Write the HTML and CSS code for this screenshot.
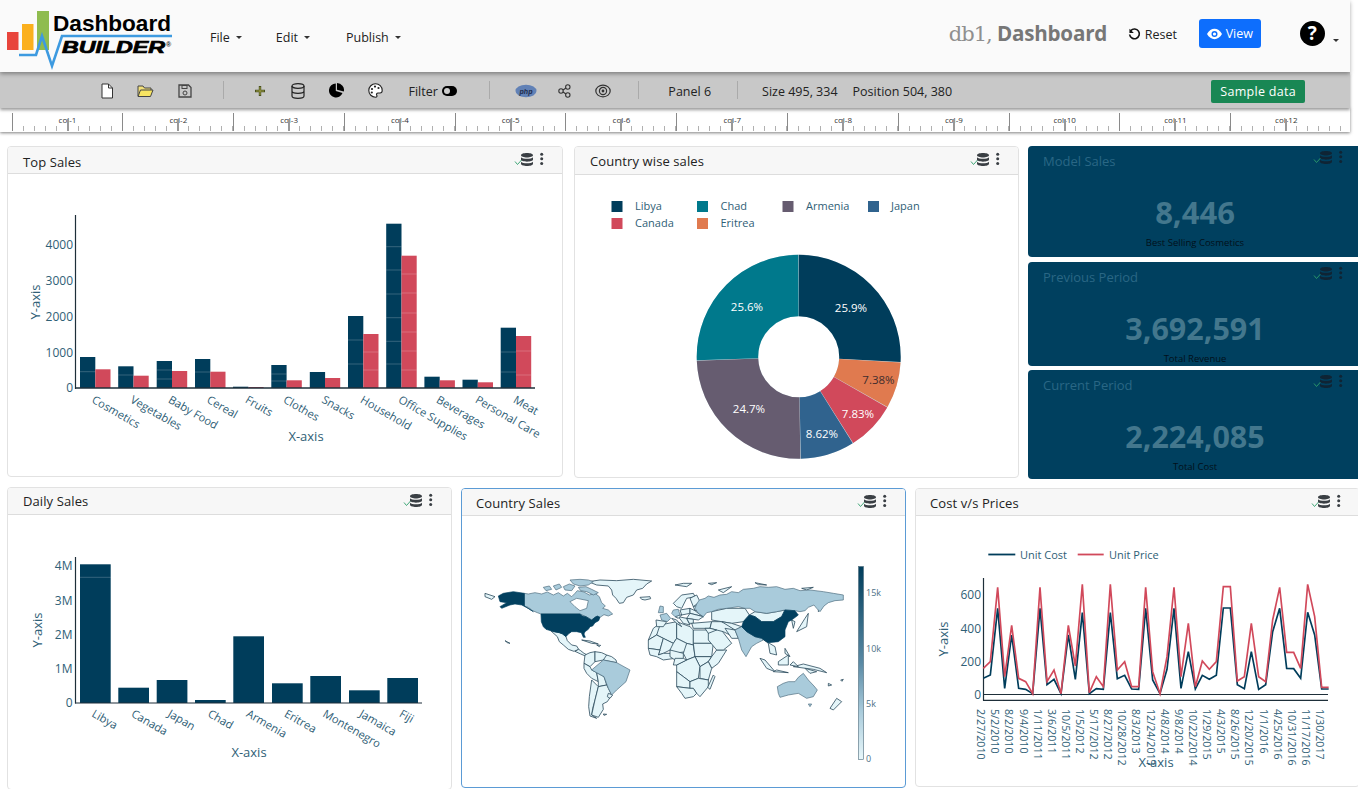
FILE: index.html
```html
<!DOCTYPE html>
<html lang="en">
<head>
<meta charset="utf-8">
<title>Dashboard Builder</title>
<link rel="stylesheet" href="styles.css">
</head>
<body>
<header class="top">
  <svg class="logo" width="190" height="72" viewBox="0 0 190 72">
    <rect x="7" y="32" width="11.500" height="18" fill="#e8453c"/>
    <rect x="22" y="24" width="11.500" height="26" fill="#fbb01d"/>
    <rect x="37" y="11" width="12" height="39" fill="#8fbc4f"/>
    <polyline points="19,55 36,55 42,36 52,66 62,36 172,36" fill="none" stroke="#3d9ae0" stroke-width="2.600"/>
    <text class="logo-a" x="53" y="31" textLength="118" lengthAdjust="spacingAndGlyphs">Dashboard</text>
    <text class="logo-b" x="62" y="53" textLength="103" lengthAdjust="spacingAndGlyphs">BUILDER</text>
    <text class="logo-r" x="166" y="47">®</text>
  </svg>
  <nav class="menu">
    <span class="menu-item m-file">File<i class="caret"></i></span>
    <span class="menu-item m-edit">Edit<i class="caret"></i></span>
    <span class="menu-item m-pub">Publish<i class="caret"></i></span>
  </nav>
  <div class="brand"><span class="brand-db">db1,</span> <b>Dashboard</b></div>
  <span class="reset">
    <svg width="13" height="13" viewBox="0 0 16 16"><path d="M3.500 3.200A6 6 0 1 1 2 8" fill="none" stroke="#111" stroke-width="2"/><path d="M1.800 .8v5.400h5.400z" fill="#111"/></svg>
    Reset</span>
  <span class="view">
    <svg width="15" height="12" viewBox="0 0 16 12"><path d="M0 6c2-3.600 5-5.500 8-5.500S14 2.400 16 6c-2 3.600-5 5.500-8 5.500S2 9.600 0 6z" fill="#fff"/><circle cx="8" cy="6" r="3.200" fill="#0d6efd"/><circle cx="8" cy="6" r="1.700" fill="#fff"/></svg>
    View</span>
  <span class="help">?</span>
  <i class="caret help-caret"></i>
</header>

<div class="toolbar">
  <span class="tb tb-first"><svg width="14" height="16" viewBox="0 0 14 16"><path d="M2 1h6.500L12.500 5v10H2z" fill="#fff" stroke="#333"/><path d="M8.500 1v4h4" fill="none" stroke="#333"/></svg></span>
  <span class="tb"><svg width="17" height="14" viewBox="0 0 17 14"><path d="M1 12V2h5l1.500 2H14v2" fill="#f2e07a" stroke="#444"/><path d="M1 12.500 3.500 6H16l-2.500 6.500z" fill="#f7e463" stroke="#444"/></svg></span>
  <span class="tb tb-save"><svg width="14" height="14" viewBox="0 0 14 14"><path d="M1 1h9.500L13 3.500V13H1z" fill="none" stroke="#444" stroke-width="1.300"/><rect x="4" y="1.500" width="5" height="3" fill="none" stroke="#444"/><circle cx="7" cy="9" r="2" fill="none" stroke="#444"/></svg></span>
  <i class="sep sep-a"></i>
  <span class="tb tb-plus"><svg width="12" height="12" viewBox="0 0 12 12"><path d="M6 1v10M1 6h10" stroke="#48501f" stroke-width="2.400"/><path d="M6 2v8M2 6h8" stroke="#a8a648" stroke-width=".9"/></svg></span>
  <span class="tb"><svg width="14" height="16" viewBox="0 0 14 16"><ellipse cx="7" cy="3" rx="6" ry="2.300" fill="none" stroke="#222" stroke-width="1.200"/><path d="M1 3v10c0 1.300 2.700 2.300 6 2.300s6-1 6-2.300V3M1 8c0 1.300 2.700 2.300 6 2.300s6-1 6-2.300" fill="none" stroke="#222" stroke-width="1.200"/></svg></span>
  <span class="tb"><svg width="15" height="15" viewBox="0 0 15 15"><path d="M6.800 .5A7 7 0 1 0 13.500 10L6.800 8z" fill="#000"/><path d="M8 0a7 7 0 0 1 6.800 8.600L8 6.800z" fill="#000"/></svg></span>
  <span class="tb"><svg width="15" height="15" viewBox="0 0 15 15"><path d="M7.500 .8a6.700 6.700 0 1 0 0 13.400c1.600 0 1.800-1.200 1.200-2-.6-1 0-2.200 1.300-2.200h2c1.300 0 2.200-.9 2.200-2.500C14.200 3.600 11.200 .8 7.500 .8z" fill="#fff" stroke="#222" stroke-width="1.100"/><circle cx="4" cy="6" r="1.100" fill="#222"/><circle cx="7" cy="3.600" r="1.100" fill="#222"/><circle cx="10.500" cy="5" r="1.100" fill="#222"/><circle cx="3.800" cy="9.500" r="1.100" fill="#222"/></svg></span>
  <span class="filter">Filter</span>
  <svg class="toggle" width="15" height="10" viewBox="0 0 15 10"><rect width="15" height="10" rx="5" fill="#000"/><circle cx="5" cy="5" r="3" fill="#ccc"/></svg>
  <i class="sep sep-b"></i>
  <span class="tb tb-php"><svg width="22" height="14" viewBox="0 0 22 14"><ellipse cx="11" cy="7" rx="10.500" ry="6.200" fill="#6181b6"/><text class="php" x="11" y="10" text-anchor="middle">php</text></svg></span>
  <span class="tb"><svg width="13" height="14" viewBox="0 0 13 14"><g fill="none" stroke="#333" stroke-width="1.100"><circle cx="3" cy="7" r="2.200"/><circle cx="9.800" cy="3" r="2.200"/><circle cx="9.800" cy="11" r="2.200"/><path d="M5 6l3-2M5 8l3 2"/></g></svg></span>
  <span class="tb"><svg width="16" height="14" viewBox="0 0 16 14"><g fill="none" stroke="#333" stroke-width="1.200"><ellipse cx="8" cy="7" rx="7.200" ry="5.800"/><circle cx="8" cy="7" r="3.600"/></g><circle cx="8" cy="7" r="1.400" fill="#333"/></svg></span>
  <i class="sep sep-c"></i>
  <span class="tb-text t-panel">Panel 6</span>
  <i class="sep sep-d"></i>
  <span class="tb-text t-size">Size 495, 334</span>
  <span class="tb-text t-pos">Position 504, 380</span>
  <span class="sample">Sample data</span>
</div>

<div class="ruler">
  <div class="rc"><span>col-1</span></div><div class="rc"><span>col-2</span></div><div class="rc"><span>col-3</span></div><div class="rc"><span>col-4</span></div><div class="rc"><span>col-5</span></div><div class="rc"><span>col-6</span></div><div class="rc"><span>col-7</span></div><div class="rc"><span>col-8</span></div><div class="rc"><span>col-9</span></div><div class="rc"><span>col-10</span></div><div class="rc"><span>col-11</span></div><div class="rc"><span>col-12</span></div>
</div>

<main class="board">
<div class="row row-one">
  <section class="panel p-top">
    <div class="ph"><span class="pt">Top Sales</span>
      <svg class="pi" width="42" height="16" viewBox="0 0 42 16"><use href="#pico"/></svg></div>
    <svg class="plot" width="554" height="302" viewBox="8 174 554 302">
      <g class="navy">
        <rect x="80" y="357" width="15.300" height="31"/><rect x="118.200" y="366.300" width="15.300" height="21.700"/><rect x="156.700" y="361" width="15.300" height="27"/><rect x="195" y="359" width="15.300" height="29"/><rect x="233" y="386.700" width="15.300" height="1.300"/><rect x="271.300" y="365" width="15.300" height="23"/><rect x="309.800" y="372" width="15.300" height="16"/><rect x="348" y="316" width="15.300" height="72"/><rect x="386.200" y="223.700" width="15.300" height="164.300"/><rect x="424.400" y="376.700" width="15.300" height="11.300"/><rect x="462.500" y="379.700" width="15.300" height="8.300"/><rect x="500.700" y="327.700" width="15.300" height="60.300"/>
      </g>
      <g class="red">
        <rect x="95.300" y="369.300" width="15.200" height="18.700"/><rect x="133.500" y="375.700" width="15.200" height="12.300"/><rect x="172" y="371" width="15.200" height="17"/><rect x="210.300" y="371.700" width="15.200" height="16.300"/><rect x="248.400" y="387" width="15.200" height="1"/><rect x="286.600" y="380.300" width="15.200" height="7.700"/><rect x="325" y="378" width="15.200" height="10"/><rect x="363.300" y="334" width="15.200" height="54"/><rect x="401.500" y="255.700" width="15.200" height="132.300"/><rect x="439.700" y="380.300" width="15.200" height="7.700"/><rect x="477.800" y="382.300" width="15.200" height="5.700"/><rect x="516" y="336" width="15.200" height="52"/>
      </g>
      <path class="seg" d="M80 371.700h15.300M118.200 375h15.300M156.700 370h15.300M156.700 379h15.300M195 372h15.300M271.300 374h15.300M271.300 381h15.300M348 340h15.300M348 364h15.300M386.200 246.700h15.300M386.200 270h15.300M386.200 294h15.300M386.200 317.700h15.300M386.200 341.300h15.300M386.200 364h15.300M500.700 352h15.300M500.700 372h15.300M401.500 274h15.200M401.500 293h15.200M401.500 313h15.200M401.500 332h15.200M401.500 351h15.200M401.500 370h15.200M363.300 352h15.200M363.300 370h15.200M516 351h15.200M516 375h15.200"/>
      <path class="axis" d="M75.500 215v174"/><path class="axis2" d="M75 388h460"/>
      <g class="tk end">
        <text x="73" y="249">4000</text><text x="73" y="285">3000</text><text x="73" y="321">2000</text><text x="73" y="357">1000</text><text x="73" y="392">0</text>
      </g>
      <g class="tk tk-r" transform="translate(3 -3)">
        <text x="88" y="405" transform="rotate(30 88 405)">Cosmetics</text>
        <text x="126.500" y="405" transform="rotate(30 126.500 405)">Vegetables</text>
        <text x="164.500" y="405" transform="rotate(30 164.500 405)">Baby Food</text>
        <text x="203" y="405" transform="rotate(30 203 405)">Cereal</text>
        <text x="241.500" y="405" transform="rotate(30 241.500 405)">Fruits</text>
        <text x="279.500" y="405" transform="rotate(30 279.500 405)">Clothes</text>
        <text x="318" y="405" transform="rotate(30 318 405)">Snacks</text>
        <text x="356.500" y="405" transform="rotate(30 356.500 405)">Household</text>
        <text x="394.500" y="405" transform="rotate(30 394.500 405)">Office Supplies</text>
        <text x="432.500" y="405" transform="rotate(30 432.500 405)">Beverages</text>
        <text x="471.500" y="405" transform="rotate(30 471.500 405)">Personal Care</text>
        <text x="509.500" y="405" transform="rotate(30 509.500 405)">Meat</text>
      </g>
      <text class="at" x="306" y="441" text-anchor="middle">X-axis</text>
      <text class="at" x="40" y="302" text-anchor="middle" transform="rotate(-90 40 302)">Y-axis</text>
    </svg>
  </section>

  <section class="panel p-pie">
    <div class="ph"><span class="pt">Country wise sales</span>
      <svg class="pi" width="42" height="16" viewBox="0 0 42 16"><use href="#pico"/></svg></div>
    <svg class="plot" width="443" height="304" viewBox="575 174 443 304">
      <g class="lg">
        <rect x="611.500" y="200" width="11" height="11" fill="#003d5b"/><text x="635" y="209">Libya</text>
        <rect x="697" y="200" width="11" height="11" fill="#00798c"/><text x="720.500" y="209">Chad</text>
        <rect x="782.500" y="200" width="11" height="11" fill="#665c70"/><text x="806" y="209">Armenia</text>
        <rect x="868" y="200" width="11" height="11" fill="#30638e"/><text x="891" y="209">Japan</text>
        <rect x="611.500" y="217" width="11" height="11" fill="#d1495b"/><text x="635" y="226">Canada</text>
        <rect x="697" y="217" width="11" height="11" fill="#e07a4f"/><text x="720.500" y="226">Eritrea</text>
      </g>
      <circle cx="798.700" cy="355.800" r="102" fill="#cfe0e6"/>
      <circle cx="798.700" cy="355.800" r="40.500" fill="#fff"/>
      <g transform="rotate(-90 798.700 355.800)" fill="none" stroke-width="61.500">
        <circle cx="798.700" cy="355.800" r="71.250" pathLength="100" stroke="#003d5b" stroke-dasharray="25.820 100"/>
        <circle cx="798.700" cy="355.800" r="71.250" pathLength="100" stroke="#e07a4f" stroke-dasharray="7.300 100" stroke-dashoffset="-25.900"/>
        <circle cx="798.700" cy="355.800" r="71.250" pathLength="100" stroke="#d1495b" stroke-dasharray="7.750 100" stroke-dashoffset="-33.280"/>
        <circle cx="798.700" cy="355.800" r="71.250" pathLength="100" stroke="#30638e" stroke-dasharray="8.540 100" stroke-dashoffset="-41.110"/>
        <circle cx="798.700" cy="355.800" r="71.250" pathLength="100" stroke="#665c70" stroke-dasharray="24.620 100" stroke-dashoffset="-49.730"/>
        <circle cx="798.700" cy="355.800" r="71.250" pathLength="100" stroke="#00798c" stroke-dasharray="25.490 100" stroke-dashoffset="-74.430"/>
      </g>
      <g class="pl">
        <text x="851" y="311">25.9%</text><text class="pl-dark" x="878.500" y="383">7.38%</text><text x="858" y="417">7.83%</text><text x="822" y="437">8.62%</text><text x="749" y="412">24.7%</text><text x="747" y="309.500">25.6%</text>
      </g>
    </svg>
  </section>

  <div class="stats">
    <section class="stat s1"><div class="sh"><span class="st">Model Sales</span>
      <svg class="pi" width="42" height="16" viewBox="0 0 42 16"><use href="#pico"/></svg></div>
      <div class="sn">8,446</div><div class="ss">Best Selling Cosmetics</div></section>
    <section class="stat s2"><div class="sh"><span class="st">Previous Period</span>
      <svg class="pi" width="42" height="16" viewBox="0 0 42 16"><use href="#pico"/></svg></div>
      <div class="sn">3,692,591</div><div class="ss">Total Revenue</div></section>
    <section class="stat s3"><div class="sh"><span class="st">Current Period</span>
      <svg class="pi" width="42" height="16" viewBox="0 0 42 16"><use href="#pico"/></svg></div>
      <div class="sn">2,224,085</div><div class="ss">Total Cost</div></section>
  </div>
</div>

<div class="row row-two">
  <section class="panel p-daily">
    <div class="ph"><span class="pt">Daily Sales</span>
      <svg class="pi" width="42" height="16" viewBox="0 0 42 16"><use href="#pico"/></svg></div>
    <svg class="plot" width="443" height="275" viewBox="8 514 443 275">
      <g class="navy">
        <rect x="80" y="563.300" width="30.700" height="138.700"/><rect x="118.300" y="686.700" width="30.700" height="15.300"/><rect x="156.700" y="679" width="30.700" height="23"/><rect x="195" y="699" width="30.700" height="3"/><rect x="233.300" y="635.300" width="30.700" height="66.700"/><rect x="272" y="682.300" width="30.700" height="19.700"/><rect x="310.300" y="675" width="30.700" height="27"/><rect x="349" y="689.300" width="30.700" height="12.700"/><rect x="387.300" y="677" width="30.700" height="25"/>
      </g>
      <path class="seg" d="M80 576.300h30.700"/>
      <path class="axis" d="M75.500 556v146.500"/><path class="axis" d="M75 702h347"/>
      <g class="tk end">
        <text x="72.500" y="569">4M</text><text x="72.500" y="604">3M</text><text x="72.500" y="638">2M</text><text x="72.500" y="672">1M</text><text x="72.500" y="706">0</text>
      </g>
      <g class="tk tk-r" transform="translate(3 -3)">
        <text x="88" y="718" transform="rotate(30 88 718)">Libya</text>
        <text x="127.500" y="718" transform="rotate(30 127.500 718)">Canada</text>
        <text x="164" y="718" transform="rotate(30 164 718)">Japan</text>
        <text x="204" y="718" transform="rotate(30 204 718)">Chad</text>
        <text x="242.500" y="718" transform="rotate(30 242.500 718)">Armenia</text>
        <text x="280.500" y="718" transform="rotate(30 280.500 718)">Eritrea</text>
        <text x="319" y="718" transform="rotate(30 319 718)">Montenegro</text>
        <text x="355.500" y="718" transform="rotate(30 355.500 718)">Jamaica</text>
        <text x="395.500" y="718" transform="rotate(30 395.500 718)">Fiji</text>
      </g>
      <text class="at" x="249" y="756" text-anchor="middle">X-axis</text>
      <text class="at" x="42" y="629" text-anchor="middle" transform="rotate(-90 42 629)">Y-axis</text>
    </svg>
  </section>

  <section class="panel p-map">
    <div class="ph"><span class="pt">Country Sales</span>
      <svg class="pi" width="42" height="16" viewBox="0 0 42 16"><use href="#pico"/></svg></div>
    <svg class="plot" width="443" height="271" viewBox="462 516 443 271">
      <defs><linearGradient id="cb" x1="0" y1="0" x2="0" y2="1"><stop offset="0" stop-color="#003d5b"/><stop offset=".5" stop-color="#5a8aa5"/><stop offset=".75" stop-color="#a9cbdb"/><stop offset="1" stop-color="#e8f7fa"/></linearGradient></defs>
      <g transform="translate(460 480) scale(.33333)">
        <g class="c-l">
          <polygon points="385,305 420,300 470,302 520,298 575,303 560,312 548,325 530,330 520,345 500,352 490,368 478,370 468,355 458,345 455,330 445,318 410,315"/>
          <polygon points="540,352 570,350 572,356 555,360 545,358"/>
          <polygon points="272,452 298,458 308,462 318,470 322,482 335,495 350,498 356,508 342,514 325,508 310,495 298,485 292,470"/>
          <polygon points="345,514 356,508 362,512 372,520 384,526 376,528 362,522"/>
          <polygon points="365,480 390,483 415,492 395,490"/>
          <polygon points="410,495 422,496 418,500"/>
          <polygon points="375,525 390,518 405,515 405,545 390,560 372,550"/>
          <polygon points="405,515 425,518 440,525 445,535 430,540 405,545"/>
          <polygon points="440,525 455,530 468,540 470,548 430,540"/>
          <polygon points="372,550 390,560 395,570 410,578 415,605 395,595 380,580 372,565"/>
          <polygon points="410,578 432,590 440,615 415,620 415,605"/>
          <polygon points="395,600 415,620 405,660 398,685 395,705 410,715 390,708 386,680 388,650"/>
          <polygon points="415,620 440,615 445,625 455,645 442,665 428,672 430,688 415,712 395,705 405,660"/>
          <polygon points="445,640 458,645 450,655 442,650"/>
          <polygon points="580,445 600,430 615,435 590,465 565,480"/>
          <polygon points="600,435 650,425 650,475 640,490 610,475 590,465"/>
          <polygon points="650,425 690,440 700,450 700,495 680,490 650,475"/>
          <polygon points="700,450 745,450 760,490 700,490"/>
          <polygon points="565,480 590,465 610,475 600,510 565,505"/>
          <polygon points="600,510 610,475 640,490 640,505 610,520 595,525"/>
          <polygon points="640,490 650,475 680,490 680,515 640,520 630,510"/>
          <polygon points="680,490 700,495 705,530 680,540 670,520"/>
          <polygon points="700,490 760,490 755,530 705,530"/>
          <polygon points="705,530 755,530 745,545 720,560"/>
          <polygon points="755,530 770,510 800,510 775,550 755,565 745,545"/>
          <polygon points="565,505 600,510 595,525 610,520 640,520 645,535 610,540 590,530 570,525"/>
          <polygon points="630,510 670,520 670,535 645,540 630,530"/>
          <polygon points="650,555 680,540 705,530 720,560 715,595 690,605 670,590 650,575"/>
          <polygon points="645,535 670,535 680,540 650,555 640,555"/>
          <polygon points="720,560 745,545 755,565 745,600 720,595"/>
          <polygon points="650,575 670,590 690,605 690,625 650,620"/>
          <polygon points="690,605 715,595 745,600 745,620 720,650 710,640 700,625 690,625"/>
          <polygon points="650,620 690,625 700,625 710,640 700,650 675,655 665,640"/>
          <polygon points="760,585 765,590 750,628 743,622"/>
          <polygon points="588,420 620,425 610,440 590,440"/>
          <polygon points="640,370 665,345 700,340 705,350 680,355 665,385 650,380"/>
          <polygon points="690,355 710,345 720,365 700,380"/>
          <polygon points="700,380 718,375 722,392 705,392"/>
          <polygon points="660,390 690,385 690,400 665,405"/>
          <polygon points="690,385 705,392 715,400 730,410 690,400"/>
          <polygon points="690,400 730,410 715,420 680,415"/>
          <polygon points="655,410 680,415 690,435 670,430"/>
          <polygon points="680,415 700,418 700,430 688,430"/>
          <polygon points="635,415 650,420 665,440 650,430"/>
          <polygon points="645,410 660,405 665,405 655,415"/>
          <polygon points="695,430 755,425 750,445 700,445"/>
          <polygon points="745,450 780,445 815,490 790,510 770,510 745,480"/>
          <polygon points="755,425 790,425 825,450 820,470 790,455 750,445"/>
          <polygon points="735,445 750,445 770,450 745,460"/>
          <polygon points="755,395 800,385 855,385 868,405 850,425 815,430 785,425 755,420"/>
          <polygon points="785,425 815,430 845,440 825,450"/>
          <polygon points="795,445 825,450 835,475 815,475"/>
          <polygon points="885,395 920,400 950,395 975,390 965,410 940,425 905,425 885,410 868,405"/>
          <polygon points="905,475 925,488 945,500 950,525 930,520 925,490"/>
          <polygon points="900,535 915,540 945,575 920,565"/>
          <polygon points="940,575 985,578 950,570"/>
          <polygon points="955,545 985,525 985,555 955,555"/>
          <polygon points="1035,565 1070,575 1050,580"/>
          <polygon points="1000,560 1030,552 1080,565 1100,578 1060,568"/>
          <polygon points="975,505 990,530 975,520"/>
          <polygon points="1000,545 1015,560 990,555"/>
          <polygon points="1035,415 1045,400 1040,440 1010,455"/>
          <polygon points="995,420 1005,425 1000,445"/>
          <polygon points="1075,375 1085,385 1075,395"/>
          <polygon points="1130,655 1145,665 1120,690 1110,685"/>
          <polygon points="645,315 670,310 695,310 680,320"/>
          <polygon points="745,310 770,308 755,314"/>
          <polygon points="775,330 815,320 790,338"/>
          <polygon points="885,308 920,315 895,314"/>
          <polygon points="1025,325 1060,322 1040,330"/>
          <polygon points="135,482 150,490 142,488"/>
          <polygon points="1105,610 1115,615 1105,618"/>
          <polygon points="1142,600 1150,598 1146,604"/>
          <polygon points="75,340 105,350 95,358 75,350"/>
          <polygon points="430,702 440,703 432,706"/>
        </g>
        <g class="c-m">
          <polygon points="193,340 205,342 225,338 245,342 262,336 280,345 295,338 310,348 322,340 335,350 345,340 352,332 372,336 388,345 405,340 418,350 425,368 436,378 428,385 445,390 458,402 445,408 432,404 420,412 408,410 395,420 378,410 360,402 243,402 232,398 218,392 205,382 193,378"/>
          <polygon points="250,322 268,318 275,328 258,332"/>
          <polygon points="280,318 298,312 305,322 288,330"/>
          <polygon points="310,320 328,312 345,318 335,332 315,330"/>
          <polygon points="330,300 360,298 385,300 400,305 385,315 360,318 340,312"/>
          <polygon points="355,322 378,320 395,328 415,338 400,345 380,335 362,332"/>
          <polygon points="705,385 710,372 718,360 735,355 745,348 762,352 780,345 800,343 815,335 835,338 850,328 880,325 900,320 925,322 950,320 975,328 1000,325 1020,332 1050,330 1090,335 1120,340 1150,345 1150,360 1125,362 1105,368 1092,378 1080,395 1070,385 1062,375 1045,382 1035,392 1020,395 1005,392 975,390 950,395 920,400 885,395 870,385 855,385 835,380 800,385 775,388 755,395 740,398 730,410 715,400"/>
          <polygon points="825,450 845,440 860,455 885,470 905,475 910,480 890,490 875,500 858,530 845,510 835,475"/>
          <polygon points="395,570 430,540 470,548 510,570 498,605 470,630 455,645 445,625 432,590 410,578"/>
          <polygon points="952,620 970,610 985,605 1005,605 1015,592 1030,580 1045,600 1062,618 1072,630 1060,650 1040,655 1015,640 985,645 960,652 955,640"/>
          <polygon points="1045,672 1055,672 1050,680"/>
          <polygon points="600,405 620,400 632,415 622,425 605,420"/>
          <polygon points="640,390 655,388 660,405 645,410 635,400"/>
          <polygon points="600,378 610,380 610,398 595,398"/>
        </g>
        <polygon class="c-w" points="330,365 350,355 385,362 380,385 360,392 345,380"/>
        <g class="c-d">
          <polygon points="115,348 130,340 160,335 193,340 193,378 220,395 205,385 185,375 165,372 150,375 125,385 120,380 140,368 120,365"/>
          <polygon points="243,402 360,402 368,408 378,410 388,416 395,420 405,412 412,408 420,412 416,422 405,428 398,438 390,440 385,448 375,455 372,462 376,472 370,472 364,458 350,455 335,455 325,462 318,470 308,462 298,458 285,456 272,452 258,448 250,440 244,425"/>
          <polygon points="850,425 868,405 885,410 905,425 940,425 965,410 975,390 1005,392 1015,405 995,420 985,425 975,450 975,470 955,485 925,488 905,475 885,470 860,455 845,440"/>
        </g>
      </g>
      <rect x="858.500" y="566.500" width="5" height="193" fill="url(#cb)" stroke="#4c6a7a" stroke-width=".6"/>
      <g class="cbt">
        <text x="866" y="596">15k</text><text x="866" y="652">10k</text><text x="866" y="707">5k</text><text x="866" y="762">0</text>
      </g>
    </svg>
  </section>

  <section class="panel p-line">
    <div class="ph"><span class="pt">Cost v/s Prices</span>
      <svg class="pi" width="42" height="16" viewBox="0 0 42 16"><use href="#pico"/></svg></div>
    <svg class="plot" width="443" height="271" viewBox="916 516 443 271">
      <path class="lc" d="M988.300 554.500h27"/><path class="lp" d="M1077.700 554.500h26"/>
      <g class="lg"><text x="1020" y="559">Unit Cost</text><text x="1109" y="559">Unit Price</text></g>
      <path class="axis" d="M983.500 578v122.500"/><path class="axis" d="M983 700.300h345"/><path class="zero" d="M984 694.500h344"/>
      <g transform="translate(910 480) scale(.33333)">
        <polyline class="lc-s" points="220,595 241,585 263,385 284,625 305,465 326,625 347,628 368,641 390,385 411,614 432,598 453,641 475,465 496,598 517,398 538,641 559,626 580,628 601,398 622,596 644,586 665,627 686,628 707,385 728,600 750,641 771,568 792,385 813,625 835,515 856,627 877,586 898,598 919,586 940,384 961,384 982,614 1003,626 1024,515 1046,628 1067,614 1088,455 1109,385 1130,565 1151,566 1172,595 1193,397 1214,465 1235,627 1256,627"/>
        <polyline class="lp-s" points="220,565 241,545 263,322 284,590 305,436 326,595 347,605 368,641 390,322 411,605 432,570 453,641 475,436 496,558 517,313 538,638 559,590 580,620 601,313 622,570 644,545 665,620 686,620 707,322 728,575 750,641 771,530 792,322 813,590 835,430 856,620 877,543 898,568 919,545 940,320 961,320 982,603 1003,590 1024,430 1046,590 1067,605 1088,420 1109,322 1130,517 1151,517 1172,565 1193,313 1214,410 1235,622 1256,622"/>
      </g>
      <g class="tk end">
        <text x="981" y="599">600</text><text x="981" y="633">400</text><text x="981" y="666">200</text><text x="981" y="699">0</text>
      </g>
      <g class="dt">
        <text transform="translate(977 709) rotate(90)">2/27/2010</text>
        <text transform="translate(991 709) rotate(90)">5/2/2010</text>
        <text transform="translate(1005.300 709) rotate(90)">8/2/2010</text>
        <text transform="translate(1019.500 709) rotate(90)">9/4/2010</text>
        <text transform="translate(1033.500 709) rotate(90)">1/11/2011</text>
        <text transform="translate(1047.700 709) rotate(90)">3/6/2011</text>
        <text transform="translate(1062 709) rotate(90)">10/5/2011</text>
        <text transform="translate(1076 709) rotate(90)">1/5/2012</text>
        <text transform="translate(1090 709) rotate(90)">5/17/2012</text>
        <text transform="translate(1104.300 709) rotate(90)">8/27/2012</text>
        <text transform="translate(1118.300 709) rotate(90)">10/28/2012</text>
        <text transform="translate(1132.300 709) rotate(90)">8/3/2013</text>
        <text transform="translate(1146.500 709) rotate(90)">12/24/2013</text>
        <text transform="translate(1160.700 709) rotate(90)">4/8/2014</text>
        <text transform="translate(1174.700 709) rotate(90)">9/8/2014</text>
        <text transform="translate(1189 709) rotate(90)">10/22/2014</text>
        <text transform="translate(1203 709) rotate(90)">1/29/2015</text>
        <text transform="translate(1217 709) rotate(90)">4/3/2015</text>
        <text transform="translate(1231.300 709) rotate(90)">8/26/2015</text>
        <text transform="translate(1245.300 709) rotate(90)">12/20/2015</text>
        <text transform="translate(1259.700 709) rotate(90)">1/1/2016</text>
        <text transform="translate(1273.700 709) rotate(90)">4/25/2016</text>
        <text transform="translate(1288 709) rotate(90)">10/31/2016</text>
        <text transform="translate(1302 709) rotate(90)">11/17/2016</text>
        <text transform="translate(1316.300 709) rotate(90)">1/30/2017</text>
      </g>
      <text class="at" x="1156" y="767" text-anchor="middle">X-axis</text>
      <text class="at" x="948" y="639" text-anchor="middle" transform="rotate(-90 948 639)">Y-axis</text>
    </svg>
  </section>
</div>
</main>

<svg class="defs" width="0" height="0" aria-hidden="true">
  <symbol id="pico" viewBox="0 0 42 16">
    <path d="M1 9.500l2.500 3L8 7.500" fill="none" stroke="#2e9e6b" stroke-width=".9"/>
    <path d="M7 3.200C7 1.800 9.800 1 13 1s6 .8 6 2.200S16.200 5.400 13 5.400 7 4.600 7 3.200zM7 5.300c1 1 3.300 1.500 6 1.500s5-.5 6-1.500v2.300c0 1.300-2.800 2.100-6 2.100s-6-.8-6-2.100zM7 9.700c1 1 3.300 1.500 6 1.500s5-.5 6-1.500v2.100c0 1.400-2.800 2.200-6 2.200s-6-.8-6-2.200z" fill="currentColor"/>
    <circle cx="27.700" cy="2.200" r="1.500" fill="currentColor"/><circle cx="27.700" cy="6.800" r="1.500" fill="currentColor"/><circle cx="27.700" cy="11.400" r="1.500" fill="currentColor"/>
  </symbol>
</svg>
</body>
</html>
```
FILE: styles.css
```css
* { box-sizing: border-box; }
html, body { margin: 0; height: 789px; overflow: hidden; background: #fff; }
body { font-family: "Open Sans", sans-serif; color: #222; position: relative; }

/* header */
.top { width: 1350px; height: 72px; background: #fafafa; display: flex; align-items: center; position: relative; z-index: 3; box-shadow: 0 2px 4px rgba(0,0,0,.35); }
.logo { flex: none; display: block; }
.logo-a { font: bold 22.6px "Liberation Sans", sans-serif; fill: #000; }
.logo-b { font: italic 900 16px "Liberation Sans", sans-serif; fill: #000; stroke: #000; stroke-width: .7px; }
.logo-r { font: bold 7px "Liberation Sans", sans-serif; fill: #222; }
.menu { display: flex; font-size: 12.5px; color: #222; margin: 2px 0 0 20px; }
.menu-item { display: inline-flex; align-items: center; }
.m-edit { margin-left: 34px; }
.m-pub { margin-left: 36px; }
.caret { display: inline-block; width: 0; height: 0; margin-left: 6px; border: 3px solid transparent; border-top-color: #333; border-bottom: 0; }
.brand { margin: -7px 0 0 548px; font-size: 20.6px; color: #777; white-space: nowrap; width: 174px; letter-spacing: -.2px; }
.brand-db { font-family: "DejaVu Serif", serif; font-size: 21px; letter-spacing: -1px; color: #8f8f8f; }
.reset { margin: -4px 0 0 5px; font-size: 12.5px; display: inline-flex; align-items: center; gap: 4px; color: #222; width: 71px; }
.view { width: 62px; height: 29px; margin-top: -5px; background: #0d6efd; color: #fff; border-radius: 3px; font-size: 12.5px; display: inline-flex; align-items: center; justify-content: center; gap: 4px; }
.help { width: 25px; height: 25px; margin: -5px 0 0 39px; border-radius: 50%; background: #000; color: #fff; font: bold 19px/25px "Open Sans", sans-serif; text-align: center; }
.help-caret { margin: 8px 0 0 8px; }

/* toolbar */
.toolbar { width: 1350px; height: 36px; background: #c8c8c8; display: flex; align-items: center; font-size: 12.5px; color: #222; position: relative; z-index: 2; box-shadow: 0 2px 3px rgba(0,0,0,.4); }
.tb { width: 38.500px; margin-top: 1px; display: inline-flex; justify-content: center; align-items: center; flex: none; }
.tb-first { margin-left: 88px; }
.tb-save { padding-left: 2px; }
.tb-plus { margin-left: 17px; }
.tb-php { margin-left: 17px; }
.sep { display: block; width: 1px; height: 18px; background: #aaa; flex: none; }
.sep-a { margin-left: 19px; }
.sep-b { margin-left: 32px; }
.sep-c { margin-left: 16px; }
.sep-d { margin-left: 26px; }
.filter { margin: 2px 0 0 14px; }
.toggle { margin: 1px 0 0 4px; flex: none; }
.php { font: italic bold 7px "Liberation Sans", sans-serif; fill: #1c2a4a; }
.tb-text { white-space: nowrap; margin-top: 2px; }
.t-panel { margin-left: 29px; }
.t-size { margin-left: 24px; }
.t-pos { margin-left: 15px; }
.sample { margin-left: 259px; margin-top: 3px; width: 94px; height: 23px; line-height: 23px; text-align: center; background: #198754; color: #fff; border-radius: 2px; letter-spacing: .3px; }

/* ruler */
.ruler { width: 1350px; height: 24px; padding: 5px 0 0 11.500px; background: #fff; display: flex; position: relative; z-index: 1; box-shadow: 0 1px 3px rgba(0,0,0,.5); }
.rc { width: 110.800px; height: 18px; flex: none; position: relative; border-left: 1px solid #8a8a8a; background: repeating-linear-gradient(90deg, transparent 0 10px, #b0b0b0 10px 11px) left bottom / 100% 5px no-repeat; }
.rc::after { content: ""; position: absolute; left: 54px; bottom: 0; width: 2px; height: 12px; background: #999; }
.rc span { position: absolute; left: 0; width: 110px; top: 1px; text-align: center; font-size: 8px; line-height: 11px; color: #333; }

/* board */
.board { padding: 14px 0 0 7px; width: 1400px; }
.row { display: flex; align-items: flex-start; }
.row-one { height: 341px; }
.panel { flex: none; background: #fff; border: 1px solid #e2e2e2; border-radius: 4px; overflow: hidden; display: flex; flex-direction: column; }
.ph { flex: none; height: 27px; background: #f7f7f7; border-bottom: 1px solid #ddd; display: flex; align-items: center; padding-left: 15px; position: relative; }
.pt { font-size: 13px; color: #222; letter-spacing: .1px; }
.pi { position: absolute; right: 6px; top: 5px; color: #3a3f44; }
.plot { flex: none; display: block; }
.p-top { width: 556px; height: 331px; }
.p-top .pt { padding-top: 3px; }
.p-pie { width: 445px; height: 332px; margin-left: 11px; }
.p-pie .ph { height: 28px; }
.p-daily { width: 445px; height: 303px; }
.p-map { width: 445px; height: 300px; margin: 1px 0 0 9px; border-color: #5b9bd5; }
.p-map .ph { padding-left: 14px; }
.p-map .pt { padding-top: 1px; }
.p-line { width: 445px; height: 299px; margin: 1px 0 0 9px; }
.p-line .ph { padding-left: 14px; }
.p-line .pt { padding-top: 1px; }

/* stats */
.stats { margin-left: 9px; width: 334px; flex: none; display: flex; flex-direction: column; }
.stat { background: #00405f; border-radius: 4px; color: #000; text-align: center; overflow: hidden; }
.s1 { height: 111px; }
.s2 { height: 104px; margin-top: 5px; }
.s3 { height: 109px; margin-top: 4px; }
.sh { height: 28px; position: relative; text-align: left; padding: 5px 0 0 15px; }
.st { display: block; font-size: 13px; line-height: 20px; color: #2a6785; }
.sh .pi { right: 7px; top: 4px; color: #0f2434; }
.sn { margin-top: 18px; font-size: 30.500px; line-height: 40px; font-weight: 700; color: #43778d; }
.s1 .sn { font-size: 31px; }
.ss { font-size: 9.500px; line-height: 14px; color: #02101a; margin-top: 4px; }

/* chart text */
.navy { fill: #003d5b; }
.red { fill: #d1495b; }
.seg { stroke: #fff; stroke-opacity: .3; stroke-width: .7; fill: none; }
.axis { stroke: #1e2f3a; stroke-width: 1.200; fill: none; }
.axis2 { stroke: #1e2f3a; stroke-width: 1.600; fill: none; }
.zero { stroke: #1e2f3a; stroke-width: 1; fill: none; }
.tk text { font: 12px "Open Sans", sans-serif; fill: #2f6076; }
.tk.end text { text-anchor: end; }
.tk-r text { font-size: 11.200px; }
.at { font: 13px "Open Sans", sans-serif; fill: #2f6076; }
.lg text { font: 11px "Open Sans", sans-serif; fill: #2f6076; }
.pl text { font: 11.500px "Open Sans", sans-serif; fill: #fff; text-anchor: middle; }
.pl .pl-dark { fill: #3f2d2d; }
.dt text { font: 10.700px "Open Sans", sans-serif; fill: #2f6076; }
.cbt text { font: 9px "Open Sans", sans-serif; fill: #4d7286; }
.lc { stroke: #003d5b; stroke-width: 1.800; fill: none; }
.lp { stroke: #d1495b; stroke-width: 1.800; fill: none; }
.lc-s { stroke: #003d5b; stroke-width: 5; fill: none; }
.lp-s { stroke: #d1495b; stroke-width: 5; fill: none; }
.c-l polygon { fill: #e4f5f9; stroke: #2b4a5c; stroke-width: 2.400; }
.c-m polygon { fill: #a9cbdb; stroke: #4a6a7c; stroke-width: 2; }
.c-d polygon { fill: #02405f; stroke: #02405f; stroke-width: 2; }
.c-w { fill: #fff; stroke: #4a6a7c; stroke-width: 2; }
.defs { position: absolute; }
```
